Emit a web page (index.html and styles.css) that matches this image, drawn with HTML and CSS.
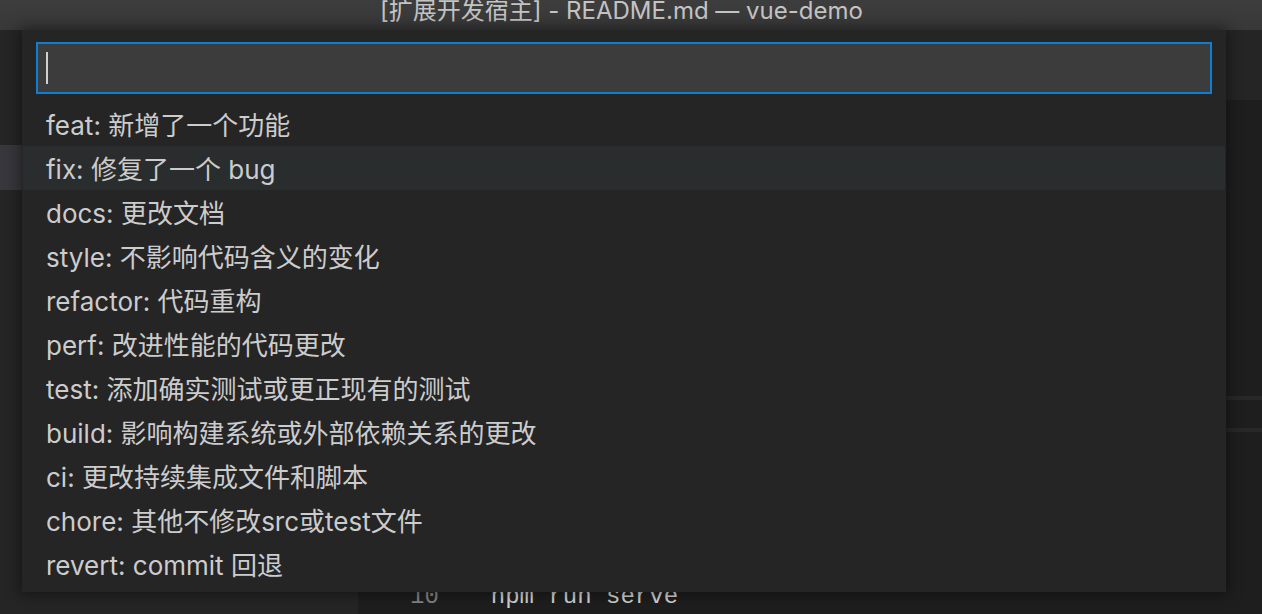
FILE: index.html
```html
<!DOCTYPE html>
<html lang="zh-CN">
<head>
<meta charset="utf-8">
<title>README.md — vue-demo</title>
<link rel="stylesheet" href="styles.css">
</head>
<body>
<div class="window">
  <header class="titlebar"><span class="title">[扩展开发宿主] - README.md — vue-demo</span></header>
  <div class="main">
    <aside class="sidebar">
      <div class="side-item"></div>
    </aside>
    <section class="editor">
      <div class="tabs"></div>
      <div class="content">
        <div class="rule"></div>
        <div class="rule second"></div>
        <div class="code-line"><span class="ln">10</span><span class="code">  npm run serve</span></div>
      </div>
    </section>
  </div>

  <div class="quick-input">
    <div class="input-box"><span class="caret"></span></div>
    <ul class="pick-list">
      <li class="pick">feat: 新增了一个功能</li>
      <li class="pick hover">fix: 修复了一个 bug</li>
      <li class="pick">docs: 更改文档</li>
      <li class="pick">style: 不影响代码含义的变化</li>
      <li class="pick">refactor: 代码重构</li>
      <li class="pick">perf: 改进性能的代码更改</li>
      <li class="pick">test: 添加确实测试或更正现有的测试</li>
      <li class="pick">build: 影响构建系统或外部依赖关系的更改</li>
      <li class="pick">ci: 更改持续集成文件和脚本</li>
      <li class="pick">chore: 其他不修改src或test文件</li>
      <li class="pick">revert: commit 回退</li>
    </ul>
  </div>
</div>
</body>
</html>
```

FILE: styles.css
```css
html, body {
  margin: 0;
  padding: 0;
}
body {
  width: 1262px;
  height: 614px;
  overflow: hidden;
  background: #1e1e1e;
  font-family: "Inter", "Noto Sans CJK SC", sans-serif;
}
.window {
  position: relative;
  width: 1262px;
  height: 614px;
  display: grid;
  grid-template-rows: 30px 1fr;
}
.titlebar {
  background: linear-gradient(#3d3d3d, #383838);
  display: flex;
  justify-content: center;
  align-items: flex-start;
  overflow: hidden;
  padding-right: 19px;
}
.title {
  font-size: 24px;
  line-height: 22px;
  color: #c4c4c4;
  white-space: nowrap;
}
.main {
  display: flex;
  min-height: 0;
}
.sidebar {
  width: 358px;
  flex: none;
  background: #252526;
  padding-top: 115px;
  box-sizing: border-box;
}
.side-item {
  height: 45px;
  background: #37373d;
}
.editor {
  flex: 1;
  display: grid;
  grid-template-rows: 70px 1fr;
}
.tabs {
  background: #252526;
}
.content {
  background: #1e1e1e;
  overflow: hidden;
}
.rule {
  margin-top: 296px;
  height: 4px;
  background: #282828;
}
.rule.second {
  margin-top: 28px;
}
.code-line {
  margin-top: 147px;
  font-family: "Liberation Mono", "DejaVu Sans Mono", monospace;
  font-size: 24px;
  line-height: 36px;
  white-space: pre;
  padding-left: 52px;
}
.ln {
  color: #858585;
  display: inline-block;
  width: 52px;
}
.code {
  color: #d4d4d4;
}

/* quick pick overlay */
.quick-input {
  position: absolute;
  left: 22px;
  top: 30px;
  width: 1204px;
  height: 562px;
  box-sizing: border-box;
  padding: 12px 14px 0;
  background: #252526;
  box-shadow: 0 0 14px 2px rgba(0, 0, 0, 0.45);
}
.input-box {
  height: 52px;
  box-sizing: border-box;
  border: 2px solid #0e7fd4;
  background: #3c3c3c;
  padding: 8px;
}
.caret {
  display: block;
  width: 2px;
  height: 32px;
  background: #d0d0d0;
}
.pick-list {
  list-style: none;
  margin: 8px -13px 0;
  padding: 0;
}
.pick {
  height: 44px;
  box-sizing: border-box;
  padding-top: 2px;
  line-height: 44px;
  padding-left: 23px;
  font-size: 26px;
  color: #cccccc;
  white-space: nowrap;
}
.pick.hover {
  background: #2a2d2e;
}
```
